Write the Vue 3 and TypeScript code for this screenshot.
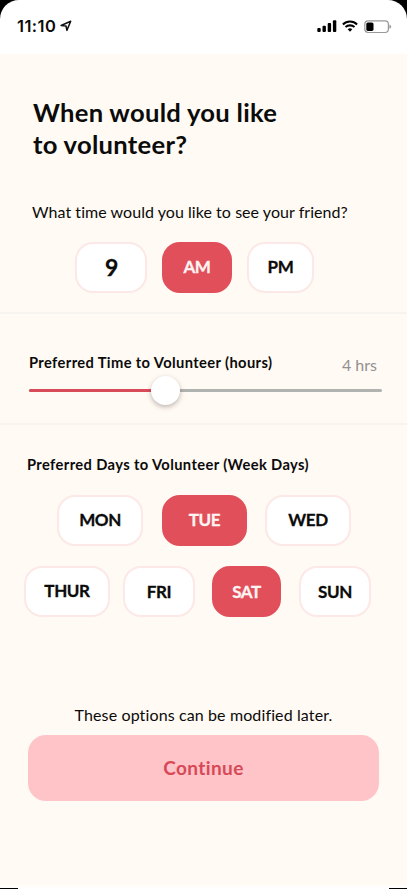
<script setup lang="ts">
import { ref } from 'vue'

interface Option {
  id: string
  label: string
}

const hour = ref(9)
const period = ref('am')
const hours = ref(4)
const percent = 38.7
const days = ref<string[]>(['tue', 'sat'])

const periods: Option[] = [
  { id: 'am', label: 'AM' },
  { id: 'pm', label: 'PM' },
]
const dayRows: Option[][] = [
  [
    { id: 'mon', label: 'MON' },
    { id: 'tue', label: 'TUE' },
    { id: 'wed', label: 'WED' },
  ],
  [
    { id: 'thur', label: 'THUR' },
    { id: 'fri', label: 'FRI' },
    { id: 'sat', label: 'SAT' },
    { id: 'sun', label: 'SUN' },
  ],
]

function toggleDay(id: string) {
  days.value = days.value.includes(id)
    ? days.value.filter((d) => d !== id)
    : [...days.value, id]
}
</script>

<template>
  <div class="device">
    <div class="screen">
      <header class="status">
        <span class="clock">11:10</span>
        <svg class="location" viewBox="0 0 12 12">
          <path d="M1.1 5.5 10.7 1.2 6.9 10.4 6 6Z" fill="none" stroke="#111" stroke-width="1.5" stroke-linejoin="round" />
        </svg>
        <svg class="signal" viewBox="0 0 20 12">
          <rect x="0.3" y="8" width="3.4" height="4" rx="1" />
          <rect x="5.5" y="5.7" width="3.4" height="6.3" rx="1" />
          <rect x="10.7" y="3" width="3.4" height="9" rx="1" />
          <rect x="15.9" y="0.3" width="3.4" height="11.7" rx="1" />
        </svg>
        <svg class="wifi" viewBox="0 0 16 12">
          <path d="M0.9 4.4a10.3 10.3 0 0 1 14.2 0" />
          <path d="M3.5 7.1a6.6 6.6 0 0 1 9 0" />
          <path class="dot" d="M5.7 9.3a3.5 3.5 0 0 1 4.6 0L8 11.8Z" />
        </svg>
        <svg class="battery" viewBox="0 0 28 14">
          <rect x="0.8" y="0.8" width="23.6" height="11.7" rx="3.4" fill="none" stroke="#999" stroke-width="1.2" />
          <rect x="2.3" y="2.4" width="7.2" height="8.5" rx="1.6" />
          <path d="M25.4 4.6q1.8.8 1.8 2.1t-1.8 2.1Z" fill="#999" />
        </svg>
      </header>

      <main>
        <section class="intro">
          <h1><span class="line one">When would you like</span><span class="line two">to volunteer?</span></h1>
          <p class="question">What time would you like to see your friend?</p>
          <div class="times">
            <button class="pill hour">{{ hour }}</button>
            <button
              v-for="p in periods"
              :key="p.id"
              class="pill"
              :class="[p.id, { active: period === p.id }]"
              @click="period = p.id"
            >{{ p.label }}</button>
          </div>
        </section>

        <section class="duration">
          <div class="duration-head">
            <h2>Preferred Time to Volunteer (hours)</h2>
            <span class="amount">{{ hours }} hrs</span>
          </div>
          <div class="slider">
            <div class="fill" :style="{ width: percent + '%' }"></div>
            <div class="knob" :style="{ left: percent + '%' }"></div>
          </div>
        </section>

        <section class="days">
          <h2>Preferred Days to Volunteer (Week Days)</h2>
          <div v-for="(row, i) in dayRows" :key="i" class="day-row" :class="'row-' + i">
            <button
              v-for="d in row"
              :key="d.id"
              class="pill"
              :class="[d.id, { active: days.includes(d.id) }]"
              @click="toggleDay(d.id)"
            >{{ d.label }}</button>
          </div>
        </section>

        <footer>
          <p class="note">These options can be modified later.</p>
          <button class="continue">Continue</button>
        </footer>
      </main>
    </div>
    <div class="edge"></div>
  </div>
</template>

<style>
body {
  background: #000;
}
</style>

<style scoped>
* {
  box-sizing: border-box;
}
.device {
  width: 407px;
  height: 889px;
  overflow: hidden;
  background: #000;
  font-family: Lato, 'Liberation Sans', sans-serif;
  font-variant-ligatures: none;
  color: #0b0b0b;
}
.screen {
  height: 888px;
  background: #fff;
  border-radius: 19px 19px 0 0;
  overflow: hidden;
  display: flex;
  flex-direction: column;
}
.edge {
  height: 1px;
  margin: 0 18px;
  background: #fff;
}
.status {
  height: 54px;
  flex: none;
  display: flex;
  align-items: flex-start;
  padding: 20px 14px 0 17px;
}
.clock {
  font: 600 16.5px/13px Inter, sans-serif;
  letter-spacing: 0.45px;
  width: 43px;
  white-space: nowrap;
}
.location {
  width: 12px;
  height: 12px;
}
.signal {
  width: 20px;
  height: 12px;
  margin-left: auto;
}
.wifi {
  width: 16px;
  height: 12px;
  margin-left: 5px;
}
.wifi path {
  fill: none;
  stroke: #000;
  stroke-width: 2.1;
}
.wifi .dot {
  fill: #000;
  stroke: none;
}
.battery {
  width: 28px;
  height: 14px;
  margin-left: 6px;
  margin-right: 1px;
}
main {
  flex: 1;
  background: linear-gradient(#fffaf3 0 830px, #fff 834px);
}
h1,
h2,
p {
  margin: 0;
  white-space: nowrap;
}
button {
  font-family: inherit;
  font-variant-ligatures: none;
  padding: 0;
  cursor: pointer;
}
.intro {
  height: 260px;
  padding-top: 42px;
  border-bottom: 2px solid #f7f4ef;
}
h1 {
  padding-left: 33px;
  font-size: 25.6px;
  line-height: 32px;
  font-weight: 700;
  letter-spacing: 0.28px;
}
.line {
  display: block;
}
.question {
  margin-top: 42px;
  padding-left: 32px;
  font-size: 16px;
  line-height: 20px;
  letter-spacing: 0.05px;
}
.times {
  display: flex;
  gap: 15px;
  padding-left: 75px;
  margin-top: 20px;
}
.pill {
  height: 51px;
  border: 2px solid #fce9e7;
  border-radius: 18px;
  background: #fff;
  color: #0b0b0b;
  font-size: 17px;
  font-weight: 700;
  letter-spacing: -0.4px;
  -webkit-text-stroke: 0.3px currentColor;
  line-height: 20px;
  padding-bottom: 1px;
}
.pill.active {
  background: #e14f5b;
  border-color: #e14f5b;
  color: #fff4f2;
}
.hour {
  width: 72px;
  font-size: 23px;
  padding-left: 1px;
}
.am {
  width: 70px;
}
.pm {
  width: 67px;
}
.duration {
  height: 111px;
  padding: 37px 25px 0 29px;
  border-bottom: 2px solid #f7f4ef;
}
.duration-head {
  display: flex;
  justify-content: space-between;
  height: 38px;
}
h2 {
  font-size: 14.7px;
  line-height: 20px;
  font-weight: 700;
  letter-spacing: 0.38px;
}
.duration h2 {
  padding-top: 1px;
}
.amount {
  font-size: 16px;
  line-height: 20px;
  padding-top: 4px;
  margin-right: 5px;
  color: #929090;
}
.slider {
  position: relative;
  height: 3px;
  border-radius: 2px;
  background: #b1b3b0;
}
.fill {
  height: 3px;
  border-radius: 2px;
  background: #d94a59;
}
.knob {
  position: absolute;
  top: -13px;
  width: 29px;
  height: 29px;
  margin-left: -15px;
  border-radius: 50%;
  background: #fff;
  box-shadow: 0 2px 5px rgba(70, 50, 50, 0.35);
}
.days {
  height: 280px;
  padding-top: 29px;
}
.days h2 {
  padding-left: 27px;
}
.day-row {
  display: flex;
}
.row-0 {
  margin-top: 21px;
  padding-left: 57px;
  gap: 19px;
}
.row-1 {
  margin-top: 20px;
  padding-left: 24px;
}
.row-1 .pill {
  padding-bottom: 0;
}
.mon,
.wed,
.thur {
  width: 86px;
}
.tue {
  width: 85px;
}
.wed {
  margin-left: -1px;
}
.row-1 .thur {
  padding-bottom: 2px;
}
.fri {
  width: 72px;
  margin-left: 13px;
}
.sat {
  width: 69px;
  margin-left: 17px;
}
.sun {
  width: 72px;
  margin-left: 18px;
}
.note {
  font-size: 16px;
  line-height: 20px;
  text-align: center;
  letter-spacing: 0.12px;
}
.continue {
  display: block;
  width: 351px;
  height: 66px;
  margin: 10px 0 0 28px;
  padding-bottom: 2px;
  border: 0;
  border-radius: 18px;
  background: #ffc4c8;
  color: #d74957;
  font-size: 19px;
  font-weight: 700;
  letter-spacing: 0.4px;
}
</style>
